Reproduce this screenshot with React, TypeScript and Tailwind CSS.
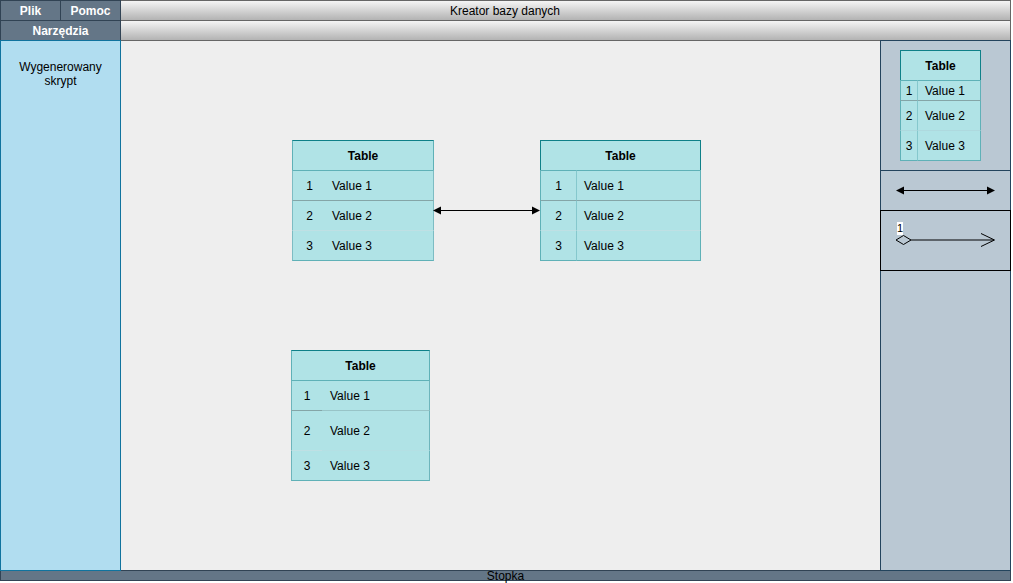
import React from "react";

type Entity = {
  id: string;
  place: string;
  headerSides: string;
  sides: string;
  numberColumn: string;
  numberPad: string;
  divider: string;
  rowHeights: [string, string, string];
  numberLines: [string, string, string];
  valueLines: [string, string, string];
};

const entities: Entity[] = [
  {
    id: "t1",
    place: "absolute left-[171px] top-[99px] w-[142px]",
    headerSides: "border-[#5fb1b7]",
    sides: "border-[#7dbcc3]",
    numberColumn: "w-8",
    numberPad: "pl-0.5",
    divider: "pl-2",
    rowHeights: ["h-[30px]", "h-[30px]", "h-[31px]"],
    numberLines: ["border-t-[#5fb1b7]", "border-t-[#84a5a7]", "border-t-[#bfe0e4]"],
    valueLines: ["border-t-[#5fb1b7]", "border-t-[#84a5a7]", "border-t-[#bfe0e4]"],
  },
  {
    id: "t2",
    place: "absolute left-[419px] top-[99px] w-[161px]",
    headerSides: "border-[#0e8088]",
    sides: "border-[#5fb1b7]",
    numberColumn: "w-9",
    numberPad: "pl-0",
    divider: "border-l border-l-[#85c8cd] pl-[7px]",
    rowHeights: ["h-[30px]", "h-[30px]", "h-[31px]"],
    numberLines: ["border-t-[#5fb1b7]", "border-t-[#84a5a7]", "border-t-[#bfe0e4]"],
    valueLines: ["border-t-[#5fb1b7]", "border-t-[#84a5a7]", "border-t-[#bfe0e4]"],
  },
  {
    id: "t3",
    place: "absolute left-[170px] top-[309px] w-[139px]",
    headerSides: "border-[#5fb1b7]",
    sides: "border-[#6db5bc]",
    numberColumn: "w-[31px]",
    numberPad: "pl-0",
    divider: "pl-2",
    rowHeights: ["h-[30px]", "h-10", "h-[31px]"],
    numberLines: ["border-t-[#5fb1b7]", "border-t-[#84a5a7]", "border-t-[#bfe0e4]"],
    valueLines: ["border-t-[#5fb1b7]", "border-t-[#98c4c7]", "border-t-[#b4e0e4]"],
  },
];

const sample: Entity = {
  id: "sample",
  place: "w-[81px]",
  headerSides: "border-[#0e8088]",
  sides: "border-[#5fb1b7]",
  numberColumn: "w-[17px]",
  numberPad: "pl-0",
  divider: "border-l border-l-[#85c8cd] pl-[7px]",
  rowHeights: ["h-5", "h-[30px]", "h-[31px]"],
  numberLines: ["border-t-[#5fb1b7]", "border-t-[#84a5a7]", "border-t-[#aed9de]"],
  valueLines: ["border-t-[#5fb1b7]", "border-t-[#84a5a7]", "border-t-[#aed9de]"],
};

function EntityTable({ entity }: { entity: Entity }) {
  return (
    <table className={`${entity.place} table-fixed border-separate border-spacing-0 bg-[#b0e3e6]`}>
      <colgroup>
        <col className={entity.numberColumn} />
        <col />
      </colgroup>
      <thead>
        <tr>
          <th colSpan={2} className={`h-[30px] border-x border-t p-0 font-bold ${entity.headerSides} border-t-[#0e8088]`}>
            Table
          </th>
        </tr>
      </thead>
      <tbody>
        {[0, 1, 2].map((i) => {
          const bottom = i === 2 ? "border-b border-b-[#5fb1b7]" : "";
          return (
            <tr key={i}>
              <td className={`border-l border-t py-0 pr-0 text-center ${entity.sides} ${entity.numberLines[i]} ${entity.numberPad} ${entity.rowHeights[i]} ${bottom}`}>
                {i + 1}
              </td>
              <td className={`whitespace-nowrap border-r border-t py-0 pr-0 ${entity.sides} ${entity.valueLines[i]} ${entity.divider} ${bottom}`}>
                Value {i + 1}
              </td>
            </tr>
          );
        })}
      </tbody>
    </table>
  );
}

function DoubleArrow({ length, className }: { length: number; className: string }) {
  return (
    <svg width={length} height={9} className={className} aria-hidden="true">
      <path d={`M6 4.5H${length - 6}`} stroke="#000" />
      <path d={`M0 4.5L8 0.5V8.5ZM${length} 4.5L${length - 8} 0.5V8.5Z`} fill="#000" />
    </svg>
  );
}

const menuButton = "h-5 border-l border-t border-[#314354] bg-[#647687] text-center font-bold text-white";

export default function App() {
  return (
    <div className="flex min-h-screen flex-col bg-white pb-0.5 pr-0.5 font-['Liberation_Sans',Arial,sans-serif] text-[12px] leading-[14px] text-black">
      <header className="flex">
        <nav className="grid w-[120px] shrink-0 grid-cols-2">
          <button type="button" className={menuButton}>Plik</button>
          <button type="button" className={menuButton}>Pomoc</button>
          <button type="button" className={`${menuButton} col-span-2`}>Narzędzia</button>
        </nav>
        <div className="flex-1 border-l border-r border-l-[#314354] border-r-[#666666]">
          <h1 className="h-5 border-t border-[#666666] bg-linear-to-b from-[#f5f5f5] to-[#b3b3b3] pr-[121px] pt-[3px] text-center">
            Kreator bazy danych
          </h1>
          <div className="h-5 border-t border-[#666666] bg-linear-to-b from-[#f5f5f5] to-[#b3b3b3]" />
        </div>
      </header>

      <div className="flex flex-1">
        <section className="w-[121px] shrink-0 border border-[#10739e] bg-[#b1ddf0] px-3 pt-[19px] text-center">
          Wygenerowany skrypt
        </section>

        <main className="relative flex-1 border-b border-t border-b-[#314354] border-t-[#666666] bg-[#eeeeee]">
          {entities.map((entity) => (
            <EntityTable key={entity.id} entity={entity} />
          ))}
          <DoubleArrow length={107} className="absolute left-[312px] top-[165px]" />
        </main>

        <aside className="w-[131px] shrink-0 border border-[#23445d] bg-[#bac8d3]">
          <div className="h-[129px] pl-[19px] pt-[9px]">
            <EntityTable entity={sample} />
          </div>
          <div className="h-10 border-t border-[#23445d] pl-[15px] pt-[15px]">
            <DoubleArrow length={99} className="block" />
          </div>
          <div className="relative -mx-px h-[61px] border border-black">
            <svg width="101" height="17" className="absolute left-[14px] top-[21px]" aria-hidden="true" fill="none" stroke="#000">
              <path d="M16 8H98" stroke="#5d646a" strokeWidth="2" />
              <path d="M1 8L8.5 3.5L16 8L8.5 12.5ZM86 1.5L99.5 8L86 14.5" />
            </svg>
            <span className="absolute left-4 top-[11px] bg-white text-[11px] leading-[13px]">1</span>
          </div>
        </aside>
      </div>

      <footer className="h-[10px] border-x border-b border-[#314354] bg-[#647687] text-center leading-[10px]">
        Stopka
      </footer>
    </div>
  );
}
